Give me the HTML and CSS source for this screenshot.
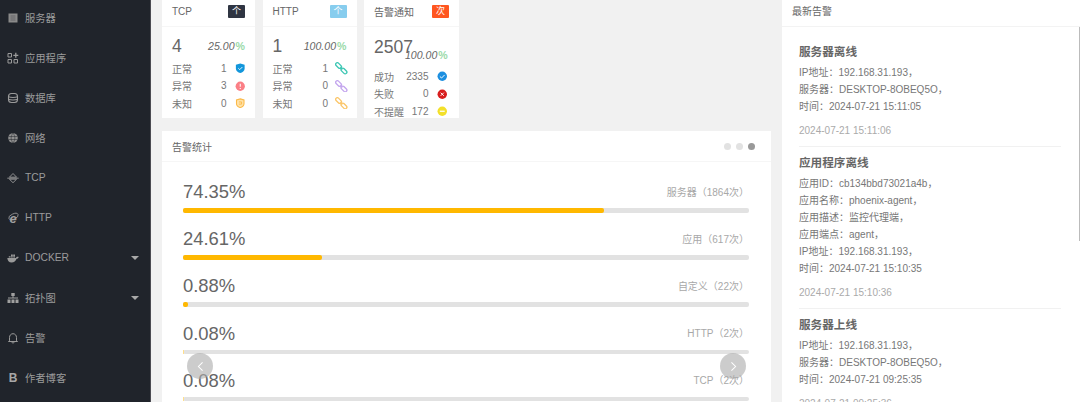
FILE: index.html
```html
<!DOCTYPE html>
<html lang="zh-CN">
<head>
  <meta charset="UTF-8" />
  <title>告警统计</title>
  <link rel="stylesheet" href="styles.css">
</head>
<body>

  <nav class="sidebar">
    <a class="nav-item"><svg class="nav-icon" viewBox="0 0 12 12"><path d="M1.500 1.500h9v9h-9z" fill="#8a8a8a"/><path d="M3.500 4h5M3.500 6h5M3.500 8h5" stroke="#5a5c60" stroke-width=".8"/></svg>服务器</a>
    <a class="nav-item"><svg class="nav-icon" viewBox="0 0 12 12" fill="none" stroke="#9a9a9a" stroke-width="1"><path d="M1 1.500h3.500v3.500h-3.500zM1 7.500h3.500v3.500h-3.500zM7 7.500h3.500v3.500h-3.500z"/><path d="M8.800 .8v5M6.300 3.300h5" stroke-width="1.300"/></svg>应用程序</a>
    <a class="nav-item"><svg class="nav-icon" viewBox="0 0 12 12" fill="none" stroke="#9a9a9a" stroke-width="1.100"><rect x="1.500" y="1.500" width="9" height="9" rx="3"/><path d="M1.500 4.700c2 1 7 1 9 0M1.500 7.300c2 1 7 1 9 0"/></svg>数据库</a>
    <a class="nav-item"><svg class="nav-icon" viewBox="0 0 12 12"><circle cx="6" cy="6" r="4.800" fill="#8f8f8f"/><path d="M1.500 4.500h9M1.500 7.500h9M6 1.200c-2.500 3-2.500 6.600 0 9.600M6 1.200c2.500 3 2.500 6.600 0 9.600" fill="none" stroke="#20242b" stroke-width=".5"/></svg>网络</a>
    <a class="nav-item"><svg class="nav-icon" viewBox="0 0 12 12" fill="none" stroke="#9a9a9a" stroke-width=".9"><path d="M6 1.500l3.600 3.700h-7.200zM2.400 7.200h7.200l-3.600 3.500zM.3 6.200h11.400"/></svg>TCP</a>
    <a class="nav-item"><svg class="nav-icon" viewBox="0 0 12 12"><ellipse cx="6.500" cy="4.500" rx="5" ry="2.600" fill="none" stroke="#9a9a9a" stroke-width=".8" transform="rotate(-25 6.500 4.500)"/><text class="ie-letter" x="6" y="10.500">e</text></svg>HTTP</a>
    <a class="nav-item"><svg class="nav-icon nav-icon-wide" viewBox="0 0 12 12"><path d="M.3 6h8.600c.4-1.100 1.500-1.500 2.800-1.100-.3 1.100-1 1.800-2.100 1.900-.8 2.400-2.600 3.700-5 3.700-2.700 0-4.100-1.800-4.300-4.500z" fill="#9a9a9a"/><path d="M1.800 4.300h1.800v1.300h-1.800zM4 4.300h1.800v1.300h-1.800zM6.200 4.300h1.800v1.300h-1.800zM4 2.500h1.800v1.400h-1.800zM6.200 2.500h1.800v1.400h-1.800z" fill="#9a9a9a"/></svg>DOCKER<i class="caret"></i></a>
    <a class="nav-item"><svg class="nav-icon" viewBox="0 0 12 12" fill="#a0a0a0"><path d="M4.300 1h3.400v3h-3.400zM5.500 4h1v2h-1zM1 5.500h10v1h-10zM.5 7.500h3v3.500h-3zM4.500 7.500h3v3.500h-3zM8.500 7.500h3v3.500h-3z"/></svg>拓扑图<i class="caret"></i></a>
    <a class="nav-item"><svg class="nav-icon" viewBox="0 0 12 12" fill="none" stroke="#9a9a9a" stroke-width="1"><path d="M2.500 8.800v-3.300c0-2.200 1.500-3.800 3.500-3.800s3.500 1.600 3.500 3.800v3.300l1 .7h-9zM4.800 10.200c.2 1.100 2.200 1.100 2.400 0"/></svg>告警</a>
    <a class="nav-item"><span class="nav-icon b-icon">B</span>作者博客</a>
  </nav>

  <main class="content">
    <div class="left-col">
      <div class="mini-cards">
        <section class="mini-card">
          <header class="mini-head">TCP<span class="badge badge-dark">个</span></header>
          <div class="mini-body">
            <div class="top-line"><span class="big-num">4</span><span class="pct">25.00<b>%</b></span></div>
            <div class="stat"><span class="stat-name">正常</span><span class="stat-val">1</span>
              <svg class="stat-icon" viewBox="0 0 12 12"><path d="M6 .5l5 1.500v4.500c0 2.500-2.500 4.300-5 5-2.500-.7-5-2.500-5-5v-4.500z" fill="#1296db"/><path d="M3.800 6l1.600 1.600 3-3" fill="none" stroke="#fff" stroke-width="1"/></svg></div>
            <div class="stat"><span class="stat-name">异常</span><span class="stat-val">3</span>
              <svg class="stat-icon" viewBox="0 0 12 12"><circle cx="6" cy="6" r="5.300" fill="#fb7f86"/><path d="M6 3v3.700M6 8v1.200" stroke="#fff" stroke-width="1.200"/></svg></div>
            <div class="stat"><span class="stat-name">未知</span><span class="stat-val">0</span>
              <svg class="stat-icon" viewBox="0 0 12 12"><path d="M6 1l4.300 1.300v4.200c0 2.200-2 3.700-4.300 4.500-2.300-.8-4.300-2.300-4.300-4.500v-4.200z" fill="#ffe2a8" stroke="#fbb948" stroke-width="1.200"/><path d="M4.500 4.500h3v2.500h-3" fill="none" stroke="#fbb948"/></svg></div>
          </div>
        </section>

        <section class="mini-card">
          <header class="mini-head">HTTP<span class="badge badge-sky">个</span></header>
          <div class="mini-body">
            <div class="top-line"><span class="big-num">1</span><span class="pct">100.00<b>%</b></span></div>
            <div class="stat"><span class="stat-name">正常</span><span class="stat-val">1</span>
              <svg class="stat-icon link-icon link-teal" viewBox="0 0 12 12"><use href="#chain"/></svg></div>
            <div class="stat"><span class="stat-name">异常</span><span class="stat-val">0</span>
              <svg class="stat-icon link-icon link-purple" viewBox="0 0 12 12"><use href="#chain"/></svg></div>
            <div class="stat"><span class="stat-name">未知</span><span class="stat-val">0</span>
              <svg class="stat-icon link-icon link-orange" viewBox="0 0 12 12"><use href="#chain"/></svg></div>
          </div>
        </section>

        <section class="mini-card mini-card-wide">
          <header class="mini-head">告警通知<span class="badge badge-orange">次</span></header>
          <div class="mini-body">
            <div class="top-line top-line-wide"><span class="big-num">2507</span><span class="pct">100.00<b>%</b></span></div>
            <div class="stat"><span class="stat-name">成功</span><span class="stat-val">2335</span>
              <svg class="stat-icon" viewBox="0 0 12 12"><circle cx="6" cy="6" r="5.400" fill="#1c8fe0"/><path d="M3.300 6.300l1.900 1.700 3.500-3.500" fill="none" stroke="#fff" stroke-width="1.100"/></svg></div>
            <div class="stat"><span class="stat-name">失败</span><span class="stat-val">0</span>
              <svg class="stat-icon" viewBox="0 0 12 12"><circle cx="6" cy="6" r="5.400" fill="#d81e1e"/><path d="M4.200 4.200l3.600 3.600M7.800 4.200l-3.600 3.600" stroke="#fff" stroke-width="1.100"/></svg></div>
            <div class="stat"><span class="stat-name">不提醒</span><span class="stat-val">172</span>
              <svg class="stat-icon" viewBox="0 0 12 12"><circle cx="6" cy="6" r="5.400" fill="#f3e02a"/><path d="M3.200 6h5.600" stroke="#fff" stroke-width="1.400"/></svg></div>
          </div>
        </section>
      </div>

      <section class="chart-card">
        <header class="chart-head">告警统计
          <div class="dots"><i></i><i></i><i class="on"></i></div>
        </header>
        <div class="bars">
          <div class="bar-row">
            <div class="bar-text"><span class="bar-pct">74.35%</span><span class="bar-name">服务器（1864次）</span></div>
            <div class="track"><div class="fill" style="width:74.35%"></div></div>
          </div>
          <div class="bar-row">
            <div class="bar-text"><span class="bar-pct">24.61%</span><span class="bar-name">应用（617次）</span></div>
            <div class="track"><div class="fill" style="width:24.61%"></div></div>
          </div>
          <div class="bar-row">
            <div class="bar-text"><span class="bar-pct">0.88%</span><span class="bar-name">自定义（22次）</span></div>
            <div class="track"><div class="fill" style="width:0.88%"></div></div>
          </div>
          <div class="bar-row">
            <div class="bar-text"><span class="bar-pct">0.08%</span><span class="bar-name">HTTP（2次）</span></div>
            <div class="track"><div class="fill fill-thin"></div></div>
          </div>
          <div class="bar-row">
            <div class="bar-text"><span class="bar-pct">0.08%</span><span class="bar-name">TCP（2次）</span></div>
            <div class="track"><div class="fill fill-thin"></div></div>
          </div>
        </div>
        <button class="arrow arrow-left"><svg viewBox="0 0 10 16"><path d="M8 2l-6 6 6 6"/></svg></button>
        <button class="arrow arrow-right"><svg viewBox="0 0 10 16"><path d="M2 2l6 6-6 6"/></svg></button>
      </section>
    </div>

    <aside class="alerts">
      <header class="alerts-head">最新告警</header>
      <div class="alerts-body">
        <article class="alert">
          <h4>服务器离线</h4>
          <p>IP地址：192.168.31.193，</p>
          <p>服务器：DESKTOP-8OBEQ5O，</p>
          <p>时间：2024-07-21 15:11:05</p>
          <div class="alert-date">2024-07-21 15:11:06</div>
        </article>
        <article class="alert">
          <h4>应用程序离线</h4>
          <p>应用ID：cb134bbd73021a4b，</p>
          <p>应用名称：phoenix-agent，</p>
          <p>应用描述：监控代理端，</p>
          <p>应用端点：agent，</p>
          <p>IP地址：192.168.31.193，</p>
          <p>时间：2024-07-21 15:10:35</p>
          <div class="alert-date">2024-07-21 15:10:36</div>
        </article>
        <article class="alert">
          <h4>服务器上线</h4>
          <p>IP地址：192.168.31.193，</p>
          <p>服务器：DESKTOP-8OBEQ5O，</p>
          <p>时间：2024-07-21 09:25:35</p>
          <div class="alert-date">2024-07-21 09:25:36</div>
        </article>
        <div class="scroll-thumb"></div>
      </div>
    </aside>
  </main>

  <svg class="defs" width="0" height="0">
    <defs>
      <g id="chain" fill="none" stroke="currentColor" stroke-width="1.300">
        <rect x="-3.200" y="-1.600" width="6.400" height="3.200" rx="1.500" transform="translate(3.400 3.400) rotate(45)"/>
        <rect x="-3.200" y="-1.600" width="6.400" height="3.200" rx="1.500" transform="translate(8.600 8.600) rotate(45)"/>
        <path d="M4.800 4.800l2.400 2.400" stroke-opacity=".6"/>
      </g>
    </defs>
  </svg>

</body>
</html>
```

FILE: styles.css
```css
html, body {
  height: 402px;
  overflow: hidden;
}

body {
  margin: 0;
  display: flex;
  background: #f1f1f1;
  font-family: "Liberation Sans", "Noto Sans CJK SC", sans-serif;
  font-size: 10px;
  color: #777;
}

.defs {
  position: absolute;
}

/* sidebar */
.sidebar {
  width: 150px;
  flex: none;
  background: #20242b;
  border-right: 1px solid #4b4b52;
  margin-top: -2.500px;
}

.nav-item {
  display: flex;
  align-items: center;
  height: 40px;
  padding-left: 7px;
  font-size: 10.300px;
  color: #9b9b9b;
}

.nav-icon {
  width: 12px;
  height: 12px;
  margin-right: 6px;
  flex: none;
}

.nav-icon-wide {
  overflow: visible;
}

.ie-letter {
  font-size: 13px;
  font-weight: bold;
  font-style: italic;
  text-anchor: middle;
  fill: #a0a0a0;
}

.b-icon {
  font-size: 12px;
  line-height: 12px;
  font-weight: bold;
  text-align: center;
  color: #a8a8a8;
}

.caret {
  margin-left: auto;
  margin-right: 11px;
  border-left: 4px solid transparent;
  border-right: 4px solid transparent;
  border-top: 4px solid #a8a8a8;
}

/* content */
.content {
  flex: 1;
  display: flex;
  gap: 11px;
  padding-left: 11px;
}

.left-col {
  width: 609px;
  flex: none;
}

.mini-cards {
  display: grid;
  grid-template-columns: 93px 94px 95px;
  column-gap: 7.500px;
  height: 118px;
  margin-bottom: 13px;
}

.mini-card {
  background: #fff;
  height: 118px;
  overflow: hidden;
}

.mini-head {
  display: flex;
  justify-content: space-between;
  align-items: center;
  height: 27px;
  padding: 0 10px 3px;
  box-sizing: border-box;
  border-bottom: 1px solid #f6f6f6;
  color: #666;
}

.badge {
  width: 17px;
  height: 13px;
  line-height: 13px;
  text-align: center;
  color: #fff;
  font-size: 9px;
  border-radius: 1px;
}

.badge-dark {
  background: #2f3542;
}

.badge-sky {
  background: #87cdee;
}

.badge-orange {
  background: #ff5620;
}

.mini-body {
  padding: 9px 10px 0;
}

.mini-card-wide .mini-body {
  padding-right: 12px;
}

.top-line {
  display: flex;
  justify-content: space-between;
  align-items: center;
  height: 20px;
  margin-bottom: 4px;
}

.top-line-wide {
  height: 30px;
  align-items: flex-start;
  margin-top: 1px;
  margin-bottom: 1px;
}

.top-line-wide .pct {
  margin-top: 12px;
  margin-left: -8px;
  white-space: nowrap;
}

.big-num {
  font-size: 17.500px;
  line-height: 20px;
  color: #666;
}

.pct {
  font-size: 10.600px;
  font-style: italic;
  color: #666;
}

.pct b {
  margin-left: 1px;
  font-style: normal;
  color: #9adaa8;
}

.stat {
  display: flex;
  align-items: center;
  height: 17.300px;
}

.stat-name {
  color: #777;
}

.stat-val {
  margin-left: auto;
  margin-right: 8px;
  color: #777;
}

.stat-icon {
  width: 10.500px;
  height: 10.500px;
  flex: none;
}

.link-icon {
  width: 12.500px;
  height: 12.500px;
  margin: 0 -1px;
}

.link-teal {
  color: #3ec7b4;
}

.link-purple {
  color: #c4a6ee;
}

.link-orange {
  color: #fbc66a;
}

/* chart */
.chart-card {
  position: relative;
  background: #fff;
  height: 290px;
}

.chart-head {
  display: flex;
  justify-content: space-between;
  align-items: center;
  height: 30px;
  padding: 0 10px;
  border-bottom: 1px solid #f6f6f6;
  color: #666;
}

.dots {
  display: flex;
  gap: 5px;
  margin-right: 6px;
}

.dots i {
  width: 7px;
  height: 7px;
  border-radius: 50%;
  background: #e2e2e2;
}

.dots i.on {
  background: #999;
}

.bars {
  padding: 17px 22px 0 21px;
}

.bar-row {
  height: 47.200px;
}

.bar-text {
  display: flex;
  justify-content: space-between;
  align-items: center;
  height: 26px;
  margin-bottom: 3px;
}

.bar-pct {
  font-size: 18.400px;
  color: #666;
}

.bar-name {
  color: #a8a8a8;
  margin-top: -2px;
}

.track {
  height: 4.500px;
  background: #e2e2e2;
  border-radius: 2px;
}

.fill {
  height: 100%;
  background: #ffb800;
  border-radius: 2px;
}

.fill-thin {
  width: 1px;
  background: #ffdf8c;
  border-radius: 0;
}

.arrow {
  position: absolute;
  top: 222px;
  width: 26px;
  height: 26px;
  padding: 0;
  border: none;
  border-radius: 50%;
  background: rgba(170, 170, 170, 0.6);
  display: flex;
  align-items: center;
  justify-content: center;
}

.arrow svg {
  width: 7px;
  height: 11px;
  fill: none;
  stroke: #fff;
  stroke-width: 1.500;
}

.arrow-left {
  left: 25px;
}

.arrow-right {
  left: 558px;
}

/* right panel */
.alerts {
  width: 298px;
  flex: none;
  background: #fff;
}

.alerts-head {
  height: 27px;
  line-height: 24px;
  padding: 0 10px;
  box-sizing: border-box;
  border-bottom: 1px solid #f3f3f3;
  color: #666;
}

.alerts-body {
  position: relative;
  padding: 16px 19px 0 17px;
}

.alert {
  border-bottom: 1px solid #f1f1f1;
  padding-bottom: 7px;
  margin-bottom: 7px;
}

.alert h4 {
  margin: 0 0 3px;
  font-size: 11.600px;
  line-height: 18px;
  font-weight: bold;
  color: #666;
}

.alert p {
  margin: 0;
  line-height: 17px;
  color: #777;
}

.alert-date {
  margin-top: 7px;
  line-height: 17px;
  color: #aaa;
}

.scroll-thumb {
  position: absolute;
  top: 0;
  right: 0;
  width: 1.500px;
  height: 214px;
  background: #bbb;
}
```
